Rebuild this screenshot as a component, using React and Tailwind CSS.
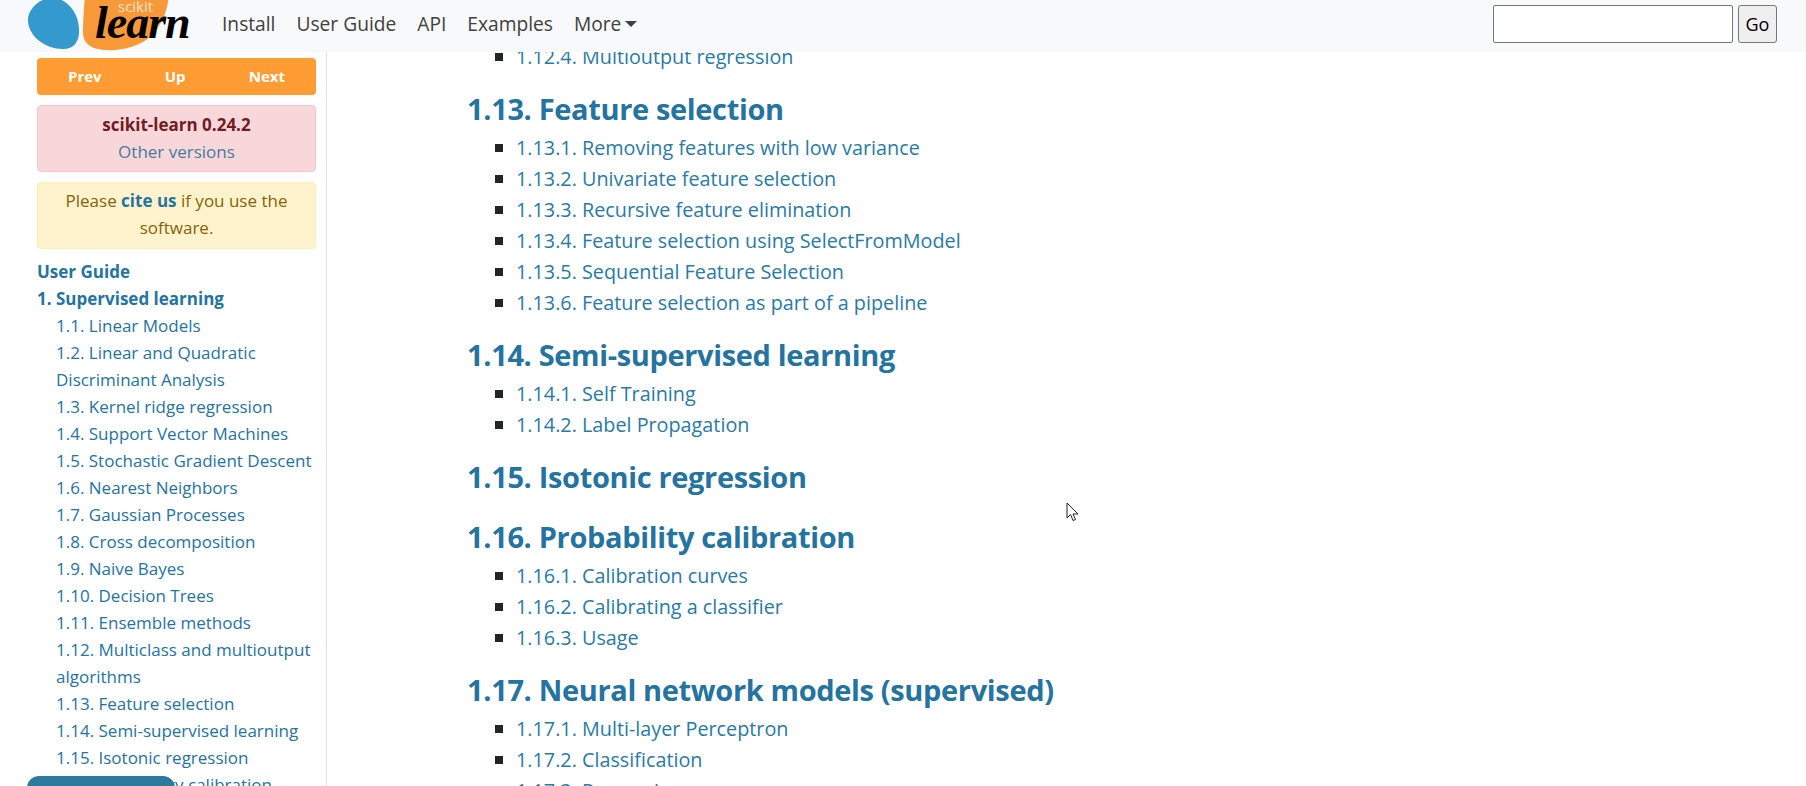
const font = { fontFamily: '"Open Sans", "Noto Sans", sans-serif' };

const sideLinks = [
  '1.1. Linear Models',
  '1.2. Linear and Quadratic Discriminant Analysis',
  '1.3. Kernel ridge regression',
  '1.4. Support Vector Machines',
  '1.5. Stochastic Gradient Descent',
  '1.6. Nearest Neighbors',
  '1.7. Gaussian Processes',
  '1.8. Cross decomposition',
  '1.9. Naive Bayes',
  '1.10. Decision Trees',
  '1.11. Ensemble methods',
  '1.12. Multiclass and multioutput algorithms',
  '1.13. Feature selection',
  '1.14. Semi-supervised learning',
  '1.15. Isotonic regression',
  '1.16. Probability calibration',
];

const sections = [
  {
    title: '1.13. Feature selection',
    items: [
      '1.13.1. Removing features with low variance',
      '1.13.2. Univariate feature selection',
      '1.13.3. Recursive feature elimination',
      '1.13.4. Feature selection using SelectFromModel',
      '1.13.5. Sequential Feature Selection',
      '1.13.6. Feature selection as part of a pipeline',
    ],
  },
  {
    title: '1.14. Semi-supervised learning',
    items: ['1.14.1. Self Training', '1.14.2. Label Propagation'],
  },
  { title: '1.15. Isotonic regression', items: [] },
  {
    title: '1.16. Probability calibration',
    items: ['1.16.1. Calibration curves', '1.16.2. Calibrating a classifier', '1.16.3. Usage'],
  },
  {
    title: '1.17. Neural network models (supervised)',
    items: ['1.17.1. Multi-layer Perceptron', '1.17.2. Classification', '1.17.3. Regression'],
  },
];

function Logo() {
  return (
    <div className="relative w-[170px] h-[52px] overflow-hidden shrink-0 self-start">
      <svg width="170" height="52" viewBox="0 0 170 52" className="absolute left-0 top-0">
        <path d="M33 -2 C46 -1 57 12 58 28 C59 40 54 49 42 49 C24 49 7 36 7 20 C7 8 20 -3 33 -2 Z" fill="#3499cd" />
        <path d="M64 -6 L148 -6 C147 8 142 24 130 36 C118 47 100 51 84 50 C68 49 62 42 62 32 C62 22 63 8 64 -6 Z" fill="#f89939" />
      </svg>
      <span className="absolute left-[97px] top-[-4px] text-[15px] leading-[20px] text-[#fde3c8]">scikit</span>
      <span className="absolute left-[74px] top-[-2px] text-[46px] leading-[50px] font-bold italic text-[#010101] tracking-[-1px] [font-family:'Liberation_Serif',serif]">
        learn
      </span>
    </div>
  );
}

function Navbar() {
  return (
    <nav className="relative z-10 h-[52px] bg-[#f8f9fa] flex items-center pl-[21px] pr-[29px] pb-[4px] shrink-0">
      <Logo />
      <div className="flex items-center ml-[31px] gap-[21px] text-[19.2px] text-[#404040]">
        <span>Install</span>
        <span>User Guide</span>
        <span>API</span>
        <span>Examples</span>
        <span className="flex items-center gap-[4px]">
          More
          <span className="w-0 h-0 border-x-[6px] border-x-transparent border-t-[6px] border-t-[#404040]" />
        </span>
      </div>
      <div className="ml-auto flex items-center gap-[5px]">
        <input className="w-[240px] h-[38px] bg-white border border-[#767676] rounded-[2px]" />
        <button className="w-[39px] h-[38px] bg-[#efefef] border border-[#767676] rounded-[3px] text-[18px] text-black">Go</button>
      </div>
    </nav>
  );
}

function Sidebar() {
  return (
    <aside className="w-[327px] shrink-0 border-r border-[#dee2e6] pl-[37px] pr-[10px] pt-[6px] text-[17px]">
      <div className="h-[37px] bg-[#ff9c34] rounded-[4px] flex items-center justify-between px-[31px] text-[15px] font-bold text-white">
        <span>Prev</span>
        <span>Up</span>
        <span>Next</span>
      </div>
      <div className="mt-[10px] h-[67px] bg-[#f8d7da] border border-[#f5c6cb] rounded-[4px] flex flex-col items-center justify-center leading-[27px] pb-[2px]">
        <span className="font-bold text-[#721c24]">scikit-learn 0.24.2</span>
        <span className="text-[#4a7a9e]">Other versions</span>
      </div>
      <div className="mt-[10px] h-[67px] bg-[#fff3cd] border border-[#ffeeba] rounded-[4px] flex items-center justify-center text-center leading-[27px] text-[#856404] px-[12px] pb-[3px]">
        <p>
          Please <b className="text-[#25739f]">cite us</b> if you use the software.
        </p>
      </div>
      <div className="mt-[9px] leading-[27px] text-[#25739f]">
        <div className="font-bold">User Guide</div>
        <div className="font-bold">1. Supervised learning</div>
        <ul className="pl-[19px]">
          {sideLinks.map((l) => (
            <li key={l}>{l}</li>
          ))}
        </ul>
      </div>
    </aside>
  );
}

function Content() {
  return (
    <main className="pl-[140px] mt-[-11px]">
      <ul className="mb-[20px] text-[19.8px] leading-[31px] text-[#2a7aa5]">
        <li className="flex items-center pl-[28px]">
          <span className="w-[8px] h-[8px] bg-[#212529] mr-[13px]" />
          1.12.4. Multioutput regression
        </li>
      </ul>
      {sections.map((s) => (
        <section key={s.title} className="mb-[20px]">
          <h2 className="text-[29px] leading-[33px] pb-[2px] font-bold text-[#25739f] tracking-[-0.35px]">{s.title}</h2>
          <ul className="pt-[5px] text-[19.8px] leading-[31px] text-[#2a7aa5]">
            {s.items.map((item) => (
              <li key={item} className="flex items-center pl-[28px]">
                <span className="w-[8px] h-[8px] bg-[#212529] mr-[13px]" />
                {item}
              </li>
            ))}
          </ul>
        </section>
      ))}
    </main>
  );
}

export default function App() {
  return (
    <div className="relative w-[1806px] h-[786px] overflow-hidden flex flex-col bg-white" style={font}>
      <Navbar />
      <div className="flex flex-1 min-h-0">
        <Sidebar />
        <Content />
      </div>
      {/* sidebar toggle tab */}
      <div className="absolute left-[27px] top-[776px] w-[148px] h-[20px] bg-[#2e7a9e] rounded-t-[12px]" />
      {/* mouse cursor */}
      <svg className="absolute left-[1066px] top-[502px]" width="14" height="21" viewBox="0 0 14 21">
        <path d="M1 1 L1 16 L4.5 12.5 L7 18.5 L9.5 17.5 L7 12 L12 12 Z" fill="#fff" stroke="#222" strokeWidth="1" />
      </svg>
    </div>
  );
}
